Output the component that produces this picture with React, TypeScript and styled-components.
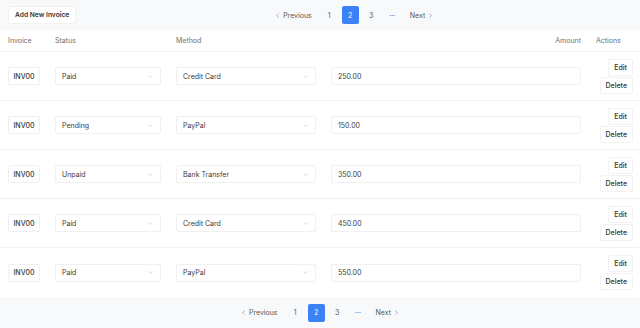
import React from 'react';
import styled, { createGlobalStyle } from 'styled-components';
import { ChevronDown, ChevronLeft, ChevronRight } from 'lucide-react';

const GlobalStyle = createGlobalStyle`
  html, body {
    margin: 0;
    padding: 0;
    background: #f8f9fa;
    font-family: Inter, 'Noto Sans', sans-serif;
    color: #333;
  }
`;

const Page = styled.div`
  width: 640px;
  height: 328px;
  display: flex;
  flex-direction: column;
  background: #f8f9fa;
`;

const TopBar = styled.div`
  height: 30px;
  box-sizing: border-box;
  padding: 6px 8px;
  display: flex;
  align-items: center;
`;

const Button = styled.button<{ $bold?: boolean }>`
  height: ${p => (p.$bold ? '18px' : '17px')};
  padding: 0 ${p => (p.$bold ? '6px' : '5px')};
  border: 1px solid #f2f2f2;
  border-radius: 2px;
  background: #fff;
  font-family: inherit;
  font-size: ${p => (p.$bold ? '6.7px' : '7px')};
  font-weight: ${p => (p.$bold ? 600 : 500)};
  color: #333;
  cursor: pointer;
`;

const PagerWrap = styled.div`
  flex: 1;
  display: flex;
  justify-content: center;
`;

const Pager = styled.nav`
  display: flex;
  align-items: center;
  gap: 4px;
`;

const PageLink = styled.span<{ $active?: boolean; $wide?: boolean }>`
  height: 18px;
  min-width: 17px;
  box-sizing: border-box;
  padding: ${p => (p.$wide ? '0 5px' : '0')};
  display: inline-flex;
  align-items: center;
  justify-content: center;
  gap: 2px;
  border-radius: 2px;
  font-size: 7px;
  color: ${p => (p.$active ? '#fff' : '#555')};
  background: ${p => (p.$active ? '#3b82f6' : 'transparent')};
`;

const Table = styled.div`
  background: #fff;
  display: flex;
  flex-direction: column;
`;

const Row = styled.div<{ $head?: boolean }>`
  height: ${p => (p.$head ? '22px' : '49px')};
  box-sizing: border-box;
  padding: 0 8px;
  display: grid;
  grid-template-columns: 32px 106px 140px 1fr 36px;
  column-gap: 15px;
  align-items: center;
  border-bottom: 1px solid #f1f1f1;
  &:last-child {
    border-bottom: none;
  }
`;

const HeadCell = styled.div<{ $right?: boolean }>`
  font-size: 7px;
  color: #707070;
  text-align: ${p => (p.$right ? 'right' : 'left')};
`;

const Field = styled.div`
  height: 18px;
  box-sizing: border-box;
  border: 1px solid #f0f0f0;
  border-radius: 2px;
  padding: 0 6px;
  display: flex;
  align-items: center;
  justify-content: space-between;
  font-size: 7px;
  color: #3a3a3a;
  background: #fff;
`;

const IdBox = styled(Field)`
  justify-content: center;
  padding: 0;
  font-weight: 500;
`;

const Actions = styled.div`
  display: flex;
  flex-direction: column;
  align-items: flex-end;
  gap: 1px;
  margin-right: -1px;
`;

const Footer = styled.div`
  flex: 1;
  display: flex;
  justify-content: center;
  align-items: center;
`;

const Pagination: React.FC = () => (
  <Pager>
    <PageLink $wide>
      <ChevronLeft size={7} strokeWidth={1.5} /> Previous
    </PageLink>
    <PageLink>1</PageLink>
    <PageLink $active>2</PageLink>
    <PageLink>3</PageLink>
    <PageLink>···</PageLink>
    <PageLink $wide>
      Next <ChevronRight size={7} strokeWidth={1.5} />
    </PageLink>
  </Pager>
);

const invoices = [
  { status: 'Paid', method: 'Credit Card', amount: '250.00' },
  { status: 'Pending', method: 'PayPal', amount: '150.00' },
  { status: 'Unpaid', method: 'Bank Transfer', amount: '350.00' },
  { status: 'Paid', method: 'Credit Card', amount: '450.00' },
  { status: 'Paid', method: 'PayPal', amount: '550.00' },
];

const App: React.FC = () => (
  <Page>
    <GlobalStyle />
    <TopBar>
      <Button $bold>Add New Invoice</Button>
      <PagerWrap>
        <Pagination />
      </PagerWrap>
    </TopBar>
    <Table>
      <Row $head>
        <HeadCell>Invoice</HeadCell>
        <HeadCell>Status</HeadCell>
        <HeadCell>Method</HeadCell>
        <HeadCell $right>Amount</HeadCell>
        <HeadCell>Actions</HeadCell>
      </Row>
      {invoices.map((inv, i) => (
        <Row key={i}>
          <IdBox>INV00</IdBox>
          <Field>
            {inv.status}
            <ChevronDown size={7} color="#aaa" strokeWidth={1.5} />
          </Field>
          <Field>
            {inv.method}
            <ChevronDown size={7} color="#aaa" strokeWidth={1.5} />
          </Field>
          <Field>{inv.amount}</Field>
          <Actions>
            <Button>Edit</Button>
            <Button>Delete</Button>
          </Actions>
        </Row>
      ))}
    </Table>
    <Footer>
      <Pagination />
    </Footer>
  </Page>
);

export default App;
